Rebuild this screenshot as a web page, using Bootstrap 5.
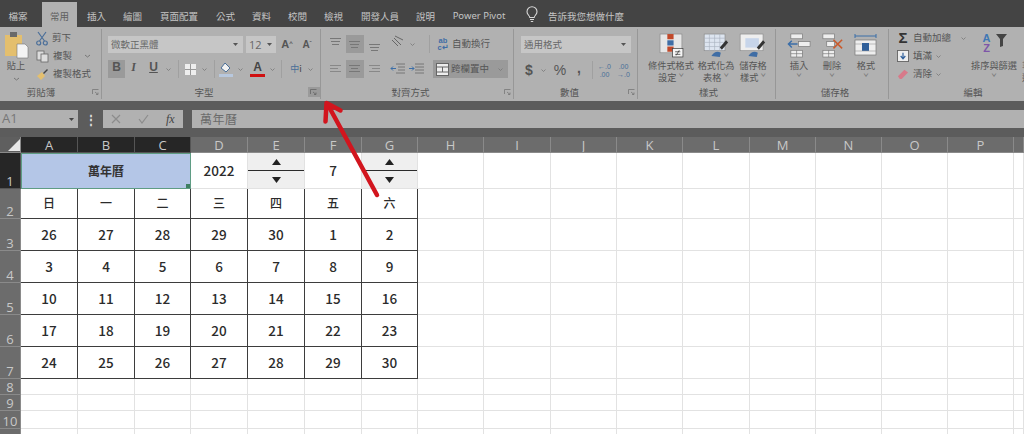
<!DOCTYPE html>
<html lang="zh-Hant">
<head>
  <meta charset="UTF-8">
  <title>萬年曆</title>
  <link href="https://cdn.jsdelivr.net/npm/bootstrap@5.3.0/dist/css/bootstrap.min.css" rel="stylesheet">
  <style>
    html, body { height: 434px; overflow: hidden; }
    body {
      background: #fff;
      font-family: "Noto Sans CJK TC", "Noto Sans", sans-serif;
      font-size: 9.5px;
      line-height: 1.2;
      color: #555;
    }
    /* tab strip */
    .tabstrip { height: 27px; background: #444; color: #c4c4c4; }
    .tab-item { height: 25px; text-align: center; line-height: 28px; flex: none; white-space: nowrap; }
    .tab-item.on { background: #b1b1b1; color: #5f5f5f; }
    /* ribbon */
    .ribbon { height: 74px; background: #b1b1b1; }
    .rgroup { height: 70px; margin-top: 2px; border-right: 1px solid #979797; flex: none; overflow: hidden; }
    .rgroup:last-child { border-right: 0; flex: 1; }
    .rbody { height: 56px; }
    .rlabel { height: 14px; line-height: 14px; text-align: center; white-space: nowrap; }
    .launcher { width: 11px; height: 10px; flex: none; align-self: center; }
    .launcher.hot { background: #9a9a9a; width: 12px; }
    .launcher svg { display: block; margin: 2px; }
    .tool { height: 18px; flex: none; }
    .tool.w17 { width: 17px; }
    .tool.w16 { width: 16px; }
    .tool.hot { background: #9a9a9a; }
    .caret-box { width: 12px; height: 18px; flex: none; display: flex; align-items: center; justify-content: center; }
    .vsep { width: 1px; height: 18px; background: #a0a0a0; flex: none; }
    .dropbox { height: 17px; background: #c6c6c6; padding-left: 3px; color: #666; flex: none; white-space: nowrap; }
    .bigtool { flex: none; text-align: center; line-height: 12px; font-size: 9.2px; white-space: nowrap; }
    .bigicon { height: 25px; width: auto; margin-bottom: 1px; }
    .smalltxt { white-space: nowrap; }
    .wrap-glyph { width: 12px; flex: none; font: 700 7.5px/7px "Liberation Sans", sans-serif; color: #3f6da5; text-align: center; }
    /* formula bar */
    .darkbar { height: 9px; background: #5c5c5c; }
    .fbar { height: 27px; background: #5c5c5c; }
    .fbox { height: 18px; background: #b1b1b1; flex: none; }
    /* sheet */
    table.sheet { border-collapse: separate; border-spacing: 0; table-layout: fixed; width: 1024px; }
    table.sheet td, table.sheet th { padding: 0; border-right: 1px solid #e2e2e2; border-bottom: 1px solid #e2e2e2; text-align: center; vertical-align: middle; overflow: hidden; }
    table.sheet th { background: #6c6c6c; color: #c8c8c8; font-family: "Open Sans", sans-serif; font-weight: 400; font-size: 13px; line-height: 14px; border-color: #8a8a8a; }
    table.sheet th.sel { background: #262626; border-color: #555; }
    table.sheet th.rowh { vertical-align: bottom; }
    table.sheet td { font-size: 13.5px; font-weight: 500; color: #2b2b2b; }
    table.sheet td.cal { border-color: #3d3d3d; }
    table.sheet td.weekday { font-size: 12px; }
    table.sheet td.merged { background: #b4c6e7; border: 1px solid #5f9c84; font-size: 12px; font-weight: 700; color: #333; position: relative; }
    .handle { position: absolute; right: 0; bottom: 0; width: 4px; height: 4px; background: #3f7f63; }
    .spin-up, .spin-down { background: #efefef; height: 17px; display: flex; align-items: center; justify-content: center; }
    .spin-up { border-bottom: 1px solid #2b2b2b; height: 18px; }
    .arrow-over { position: absolute; left: 0; top: 0; pointer-events: none; }
    .sort-letters { width: 10px; font: 700 11px/10px "Liberation Sans", sans-serif; }
  </style>
</head>
<body class="position-relative">

  <!-- tabs -->
  <div class="tabstrip d-flex align-items-end">
    <div class="tab-item" style="width:36px">檔案</div>
    <div class="tab-item on" style="width:35px;margin-left:6px">常用</div>
    <div class="tab-item" style="width:21px;margin-left:9px">插入</div>
    <div class="tab-item" style="width:19px;margin-left:16px">繪圖</div>
    <div class="tab-item" style="width:38px;margin-left:18px">頁面配置</div>
    <div class="tab-item" style="width:19px;margin-left:18px">公式</div>
    <div class="tab-item" style="width:19px;margin-left:17px">資料</div>
    <div class="tab-item" style="width:19px;margin-left:17px">校閱</div>
    <div class="tab-item" style="width:19px;margin-left:17px">檢視</div>
    <div class="tab-item" style="width:38px;margin-left:18px">開發人員</div>
    <div class="tab-item" style="width:19px;margin-left:17px">說明</div>
    <div class="tab-item" style="width:54px;margin-left:17px;font-family:'Noto Sans',sans-serif">Power Pivot</div>
    <svg class="mb-1" style="margin-left:20px" width="12" height="17" viewBox="0 0 12 17" fill="none" stroke="#d8d8d8" stroke-width="1.1"><path d="M3.8 11.5C3.600 9.500 1 8.600 1 5.700a5 5 0 0 1 10 0c0 2.900-2.600 3.800-2.800 5.800zM4 13.500h4M4.800 15.500h2.400"/></svg>
    <div class="tab-item" style="width:78px;margin-left:9px">告訴我您想做什麼</div>
  </div>

  <!-- ribbon -->
  <div class="ribbon d-flex">

    <!-- clipboard -->
    <div class="rgroup" style="width:102px">
      <div class="rbody d-flex">
        <div class="bigtool" style="width:32px;padding-top:3px">
          <svg width="24" height="27" viewBox="0 0 24 27" class="d-block" style="margin-left:5px"><rect x="0" y="3" width="17" height="21" fill="#e4bf6e"/><rect x="5" y="0" width="7" height="5" fill="#6a6a6a"/><path d="M12 12h8l3 3v11H12z" fill="#f4f4f4" stroke="#777" stroke-width=".6"/></svg>
          <div>貼上</div>
          <svg width="7" height="4" viewBox="0 0 7 4"><path d="M1 1l2.500 2L6 1" fill="none" stroke="#777"/></svg>
        </div>
        <div class="smalltxt ms-1">
          <div class="d-flex align-items-center gap-1" style="height:18px">
            <svg width="12" height="15" viewBox="0 0 12 15" fill="none" stroke="#4b6f9a" stroke-width="1.200"><path d="M2 1l6.500 9M10 1L3.500 10"/><circle cx="2.700" cy="12" r="2"/><circle cx="9.300" cy="12" r="2"/></svg>
            <span>剪下</span>
          </div>
          <div class="d-flex align-items-center gap-1" style="height:18px">
            <svg width="13" height="13" viewBox="0 0 13 13" fill="#ddd" stroke="#666" stroke-width=".8"><rect x="1" y="1" width="7" height="9"/><rect x="5" y="4" width="7" height="8"/></svg>
            <span>複製</span>
            <svg class="ms-2" width="7" height="4" viewBox="0 0 7 4"><path d="M1 1l2.500 2L6 1" fill="none" stroke="#777"/></svg>
          </div>
          <div class="d-flex align-items-center gap-1" style="height:18px">
            <svg width="13" height="13" viewBox="0 0 13 13"><path d="M1 8l5-4 3 4-4 4z" fill="#e4bf6e"/><path d="M7 5l4-4 1 1-4 4z" fill="#444"/></svg>
            <span>複製格式</span>
          </div>
        </div>
      </div>
      <div class="d-flex">
        <div class="rlabel flex-grow-1" style="padding-right:8px">剪貼簿</div>
        <div class="launcher"><svg width="7" height="6" viewBox="0 0 7 6" fill="none" stroke="#777" stroke-width=".8"><path d="M.5 5V.5H6.500M3 3l3 2.500M6 3.500v2H4"/></svg></div>
      </div>
    </div>

    <!-- font -->
    <div class="rgroup" style="width:219px;padding-left:6px">
      <div class="rbody">
        <div class="d-flex align-items-center" style="height:24px;padding-top:7px">
          <div class="dropbox d-flex align-items-center justify-content-between" style="width:135px;padding-right:5px"><span>微軟正黑體</span><svg width="5" height="3" viewBox="0 0 5 3"><path d="M0 0h5L2.500 3z" fill="#555"/></svg></div>
          <div class="dropbox d-flex align-items-center justify-content-between" style="width:30px;margin-left:3px;padding-right:4px;font-size:11px;font-family:'Open Sans',sans-serif"><span>12</span><svg width="5" height="3" viewBox="0 0 5 3"><path d="M0 0h5L2.500 3z" fill="#555"/></svg></div>
          <div class="fw-bold text-center" style="width:20px;margin-left:1px;font-size:11px;font-family:'Liberation Sans',sans-serif">A<sup style="font-size:6px">^</sup></div>
          <div class="fw-bold text-center" style="width:20px;font-size:10px;font-family:'Liberation Sans',sans-serif">A<sup style="font-size:6px">ˇ</sup></div>
        </div>
        <div class="d-flex align-items-center" style="margin-top:7px;font-family:'Liberation Sans',sans-serif;font-size:12px;height:18px">
          <div class="tool w17 hot fw-bold text-center">B</div>
          <div class="tool w17 fw-bold fst-italic text-center" style="font-family:'Liberation Serif',serif">I</div>
          <div class="tool w17 fw-bold text-center text-decoration-underline" style="margin-left:3px">U</div>
          <div class="caret-box"><svg width="5" height="3" viewBox="0 0 5 3"><path d="M.5.500l2 2 2-2" fill="none" stroke="#777" stroke-width=".8"/></svg></div>
          <div class="vsep" style="margin:0 3px 0 4px"></div>
          <div class="tool w16 d-flex align-items-center justify-content-center"><svg width="11" height="11" viewBox="0 0 11 11"><rect width="11" height="11" fill="#eee"/><path d="M5.500 0v11M0 5.500h11" stroke="#999"/></svg></div>
          <div class="caret-box"><svg width="5" height="3" viewBox="0 0 5 3"><path d="M.5.500l2 2 2-2" fill="none" stroke="#777" stroke-width=".8"/></svg></div>
          <div class="vsep" style="margin:0 3px 0 4px"></div>
          <div class="tool w16 d-flex align-items-center justify-content-center"><svg width="14" height="15" viewBox="0 0 14 15"><path d="M6 1l5 5-4 4-5-4z" fill="#f1f1f1" stroke="#4a6f98"/><rect y="12" width="14" height="3" fill="#b8c8de"/></svg></div>
          <div class="caret-box"><svg width="5" height="3" viewBox="0 0 5 3"><path d="M.5.500l2 2 2-2" fill="none" stroke="#777" stroke-width=".8"/></svg></div>
          <div class="tool w17 text-center fw-bold" style="margin-left:3px;color:#444;line-height:15px">A<div style="height:3px;background:#d01010;margin:-1px 1px 0"></div></div>
          <div class="caret-box"><svg width="5" height="3" viewBox="0 0 5 3"><path d="M.5.500l2 2 2-2" fill="none" stroke="#777" stroke-width=".8"/></svg></div>
          <div class="vsep" style="margin:0 6px 0 3px"></div>
          <div class="tool w16 text-center" style="font-family:'Noto Sans CJK TC',sans-serif;font-size:9px;color:#4a6f98;line-height:18px;white-space:nowrap">中<span style="color:#444">i</span></div>
          <div class="caret-box"><svg width="5" height="3" viewBox="0 0 5 3"><path d="M.5.500l2 2 2-2" fill="none" stroke="#777" stroke-width=".8"/></svg></div>
        </div>
      </div>
      <div class="d-flex">
        <div class="rlabel flex-grow-1" style="padding-right:8px">字型</div>
        <div class="launcher hot"><svg width="7" height="6" viewBox="0 0 7 6" fill="none" stroke="#666" stroke-width=".8"><path d="M.5 5V.5H6.500M3 3l3 2.500M6 3.500v2H4"/></svg></div>
      </div>
    </div>

    <!-- alignment -->
    <div class="rgroup" style="width:193px;padding-left:6px">
      <div class="rbody" style="padding-top:6px">
        <div class="d-flex align-items-center" style="height:18px">
          <div class="tool w17"><svg width="17" height="18" viewBox="0 0 17 18" stroke="#777"><path d="M3 3.500h11M4 6.500h9M5 9.500h7" fill="none"/></svg></div>
          <div class="tool hot" style="width:18px;margin-left:2px"><svg width="17" height="18" viewBox="0 0 17 18" stroke="#777"><path d="M3 6.500h11M4 9.500h9M5 12.500h7" fill="none"/></svg></div>
          <div class="tool w17" style="margin-left:2px"><svg width="17" height="18" viewBox="0 0 17 18" stroke="#777"><path d="M3 9.500h11M4 12.500h9M5 15.500h7" fill="none"/></svg></div>
          <div class="tool w16" style="margin-left:7px"><svg width="16" height="16" viewBox="0 0 16 16" fill="none" stroke="#666"><path d="M2 5l6 6M4 3l7 7M5 1l8 4"/></svg></div>
          <div class="caret-box"><svg width="5" height="3" viewBox="0 0 5 3"><path d="M.5.500l2 2 2-2" fill="none" stroke="#777" stroke-width=".8"/></svg></div>
          <div class="vsep" style="margin:0 7px 0 11px"></div>
          <div class="wrap-glyph">ab<br>c↵</div>
          <span class="smalltxt" style="margin-left:3px">自動換行</span>
        </div>
        <div class="d-flex align-items-center" style="margin-top:7px;height:18px">
          <div class="tool w17"><svg width="17" height="18" viewBox="0 0 17 18" stroke="#888"><path d="M3 5.500h11M3 8.500h8M3 11.500h11" fill="none"/></svg></div>
          <div class="tool hot" style="width:18px;margin-left:2px"><svg width="17" height="18" viewBox="0 0 17 18" stroke="#777"><path d="M3 5.500h11M5 8.500h7M3 11.500h11" fill="none"/></svg></div>
          <div class="tool w17" style="margin-left:2px"><svg width="17" height="18" viewBox="0 0 17 18" stroke="#888"><path d="M3 5.500h11M6 8.500h8M3 11.500h11" fill="none"/></svg></div>
          <div class="tool w16" style="margin-left:7px"><svg width="16" height="18" viewBox="0 0 16 18" fill="none"><path d="M6 4h9M8 7h7M8 10h7M6 13h9" stroke="#777"/><path d="M1 8.500h5M3 6.500l-2 2 2 2" stroke="#3b6ea8"/></svg></div>
          <div class="tool w16" style="margin-left:2px"><svg width="16" height="18" viewBox="0 0 16 18" fill="none"><path d="M7 4h9M7 7h9M7 10h9M7 13h9" stroke="#777"/><path d="M1 8.500h5M4 6.500l2 2-2 2" stroke="#3b6ea8"/></svg></div>
          <div class="tool hot d-flex align-items-center" style="width:75px;margin-left:9px">
            <svg style="margin-left:3px" width="13" height="13" viewBox="0 0 13 13" fill="#eee" stroke="#666"><rect x=".5" y=".5" width="12" height="12"/><path d="M.5 4h12M.5 9h12M6.500 4v5" fill="none"/></svg>
            <span class="smalltxt" style="margin-left:2px">跨欄置中</span>
            <svg style="margin-left:9px" width="5" height="3" viewBox="0 0 5 3"><path d="M.5.500l2 2 2-2" fill="none" stroke="#777" stroke-width=".8"/></svg>
          </div>
        </div>
      </div>
      <div class="d-flex">
        <div class="rlabel flex-grow-1" style="padding-right:8px">對齊方式</div>
        <div class="launcher"><svg width="7" height="6" viewBox="0 0 7 6" fill="none" stroke="#777" stroke-width=".8"><path d="M.5 5V.5H6.500M3 3l3 2.500M6 3.500v2H4"/></svg></div>
      </div>
    </div>

    <!-- number -->
    <div class="rgroup" style="width:124px;padding-left:7px">
      <div class="rbody" style="padding-top:7px">
        <div class="dropbox d-flex align-items-center justify-content-between" style="width:110px;padding-right:5px"><span>通用格式</span><svg width="5" height="3" viewBox="0 0 5 3"><path d="M0 0h5L2.500 3z" fill="#555"/></svg></div>
        <div class="d-flex align-items-center" style="margin-top:8px;height:18px;font-family:'Liberation Sans',sans-serif">
          <div class="tool w16 text-center fw-bold" style="font-size:14px;line-height:18px">$</div>
          <div class="caret-box"><svg width="5" height="3" viewBox="0 0 5 3"><path d="M.5.500l2 2 2-2" fill="none" stroke="#777" stroke-width=".8"/></svg></div>
          <div class="tool w16 text-center" style="font-size:14px;line-height:18px;margin-left:3px">%</div>
          <div class="tool w16 text-center fw-bold" style="font-size:14px;line-height:14px;margin-left:3px">,</div>
          <div class="vsep" style="margin:0 3px 0 5px"></div>
          <div class="tool w17 text-center" style="font-size:7px;line-height:8px;padding-top:2px;color:#4a6f98;white-space:nowrap">←.0<br>.00</div>
          <div class="tool w17 text-center" style="font-size:7px;line-height:8px;padding-top:2px;margin-left:2px;color:#4a6f98;white-space:nowrap">.00<br>→.0</div>
        </div>
      </div>
      <div class="d-flex">
        <div class="rlabel flex-grow-1" style="padding-right:8px">數值</div>
        <div class="launcher"><svg width="7" height="6" viewBox="0 0 7 6" fill="none" stroke="#777" stroke-width=".8"><path d="M.5 5V.5H6.500M3 3l3 2.500M6 3.500v2H4"/></svg></div>
      </div>
    </div>

    <!-- styles -->
    <div class="rgroup" style="width:138px;padding-left:9px">
      <div class="rbody d-flex" style="padding-top:4px">
        <div class="bigtool" style="width:48px">
          <svg class="bigicon d-block mx-auto" viewBox="0 0 24 24"><rect x="1" y="1" width="21" height="18" fill="#e6e6e6" stroke="#888" stroke-width=".6"/><rect x="8" y="1" width="6" height="5" fill="#c1492a"/><rect x="8" y="7" width="6" height="5" fill="#3f6da5"/><rect x="8" y="13" width="6" height="5" fill="#c1492a"/><rect x="13" y="15" width="10" height="8" fill="#f4f4f4" stroke="#444" stroke-width=".7"/><path d="M15.500 18h5M15.500 20.500h5M19.500 16.500l-3 5" stroke="#333" stroke-width=".7"/></svg>
          條件式格式<br>設定 <span style="color:#777">ˇ</span>
        </div>
        <div class="bigtool" style="width:38px;margin-left:2px">
          <svg class="bigicon d-block mx-auto" viewBox="0 0 30 24"><rect x="4" y="1" width="20" height="16" fill="#dde5f0" stroke="#888" stroke-width=".6"/><path d="M4 5h20M4 9h20M4 13h20M9 1v16M14 1v16M19 1v16" stroke="#a9b2bf" stroke-width=".6"/><path d="M19 14l6-7 2 2-6 7z" fill="#333"/><path d="M11 22q4-6 9-3l-1 4z" fill="#3f6da5"/></svg>
          格式化為<br>表格 <span style="color:#777">ˇ</span>
        </div>
        <div class="bigtool" style="width:38px;margin-left:-1px">
          <svg class="bigicon d-block mx-auto" viewBox="0 0 30 24"><rect x="3" y="1" width="22" height="16" fill="#eee" stroke="#888" stroke-width=".6"/><rect x="8" y="5" width="13" height="9" fill="#c7d5ea"/><path d="M19 14l6-7 2 2-6 7z" fill="#333"/><path d="M11 22q4-6 9-3l-1 4z" fill="#3f6da5"/></svg>
          儲存格<br>樣式 <span style="color:#777">ˇ</span>
        </div>
      </div>
      <div class="rlabel" style="padding-right:5px">樣式</div>
    </div>

    <!-- cells -->
    <div class="rgroup" style="width:113px;padding-left:6px">
      <div class="rbody d-flex" style="padding-top:4px">
        <div class="bigtool" style="width:34px">
          <svg class="bigicon d-block mx-auto" viewBox="0 0 26 26" fill="#eee" stroke="#777" stroke-width=".7"><rect x="4" y="1" width="12" height="5"/><rect x="4" y="18" width="12" height="7"/><path d="M4 21.500h12M10 18v7" fill="none"/><rect x="12" y="9" width="12" height="5"/><path d="M1 11.500h10M5 8l-3.500 3.500L5 15" fill="none" stroke="#3b6ea8" stroke-width="1.500"/></svg>
          插入<br><span style="color:#777">ˇ</span>
        </div>
        <div class="bigtool" style="width:34px;margin-left:-1px">
          <svg class="bigicon d-block mx-auto" viewBox="0 0 26 26" fill="#eee" stroke="#777" stroke-width=".7"><rect x="3" y="1" width="12" height="5"/><rect x="3" y="18" width="12" height="7"/><path d="M3 21.500h12M9 18v7" fill="none"/><rect x="7" y="9" width="8" height="5"/><path d="M14 7l9 9M23 7l-9 9" fill="none" stroke="#c95a2c" stroke-width="1.600"/></svg>
          刪除<br><span style="color:#777">ˇ</span>
        </div>
        <div class="bigtool" style="width:34px">
          <svg class="bigicon d-block mx-auto" viewBox="0 0 24 25"><path d="M1 3h21M1 1v4M22 1v4" stroke="#3b6ea8" fill="none"/><rect x="1" y="7" width="21" height="15" fill="#eee" stroke="#777" stroke-width=".7"/><rect x="8" y="10" width="7" height="8" fill="#2f5f9a"/><path d="M1 11h7M15 11h7M1 18h21" stroke="#999" stroke-width=".6"/></svg>
          格式<br><span style="color:#777">ˇ</span>
        </div>
      </div>
      <div class="rlabel">儲存格</div>
    </div>

    <!-- editing -->
    <div class="rgroup" style="padding-left:7px">
      <div class="rbody d-flex">
        <div class="smalltxt flex-shrink-0" style="width:73px">
          <div class="d-flex align-items-center" style="height:18px">
            <span class="text-center fw-bold" style="width:14px;font-size:15px;color:#333;font-family:'Liberation Sans',sans-serif">Σ</span>
            <span style="margin-left:3px">自動加總</span>
            <svg style="margin-left:10px" width="5" height="3" viewBox="0 0 5 3"><path d="M.5.500l2 2 2-2" fill="none" stroke="#777" stroke-width=".8"/></svg>
          </div>
          <div class="d-flex align-items-center" style="height:18px">
            <svg style="margin-left:1px" width="12" height="12" viewBox="0 0 13 13"><rect x=".5" y=".5" width="12" height="12" fill="#eee" stroke="#666"/><path d="M6.500 3v6M4 6.500l2.500 3 2.500-3" fill="none" stroke="#2f5f9a" stroke-width="1.300"/></svg>
            <span style="margin-left:4px">填滿</span>
            <svg class="ms-1" width="5" height="3" viewBox="0 0 5 3"><path d="M.5.500l2 2 2-2" fill="none" stroke="#777" stroke-width=".8"/></svg>
          </div>
          <div class="d-flex align-items-center" style="height:18px">
            <svg style="margin-left:1px" width="12" height="12" viewBox="0 0 13 13"><path d="M1 9l7-7 4 3-7 7H3z" fill="#d77a8a"/></svg>
            <span style="margin-left:4px">清除</span>
            <svg class="ms-1" width="5" height="3" viewBox="0 0 5 3"><path d="M.5.500l2 2 2-2" fill="none" stroke="#777" stroke-width=".8"/></svg>
          </div>
        </div>
        <div class="bigtool" style="width:50px;padding-top:4px">
          <div class="d-flex justify-content-center" style="height:25px;margin-bottom:1px">
            <div class="sort-letters"><div style="color:#3f77b5">A</div><div style="color:#7d55a8">Z</div></div>
            <svg class="ms-1" width="11" height="14" viewBox="0 0 11 14"><path d="M0 1h11L7 6v7l-3 1V6z" fill="#444"/></svg>
          </div>
          排序與篩選<br><span style="color:#777">ˇ</span>
        </div>
        <div class="bigtool" style="margin-left:3px;padding-top:30px">尋<br>選</div>
      </div>
      <div class="rlabel" style="padding-left:26px;width:128px">編輯</div>
    </div>
  </div>

  <div class="darkbar"></div>

  <!-- formula bar -->
  <div class="fbar d-flex">
    <div class="fbox d-flex align-items-center justify-content-between" style="width:78px;padding:0 4px 0 2px;font-family:'Open Sans',sans-serif;font-size:13px;color:#777"><span>A1</span><svg width="5" height="3" viewBox="0 0 5 3"><path d="M0 0h5L2.500 3z" fill="#444"/></svg></div>
    <div class="text-center" style="width:25px;height:18px;color:#ddd;font-weight:700;font-size:12px;line-height:18px">⋮</div>
    <div class="fbox d-flex align-items-center justify-content-around" style="width:80px">
      <svg width="10" height="10" viewBox="0 0 10 10" stroke="#8c8c8c" stroke-width="1.200"><path d="M1 1l8 8M9 1L1 9"/></svg>
      <svg width="11" height="10" viewBox="0 0 11 10" fill="none" stroke="#8c8c8c" stroke-width="1.200"><path d="M1 5l3 4 6-8"/></svg>
      <span style="font-family:'Liberation Serif',serif;font-style:italic;font-size:12px;color:#444">fx</span>
    </div>
    <div class="fbox flex-grow-1 px-2" style="margin-left:9px;font-size:12px;line-height:18px;color:#6b6b6b;letter-spacing:.5px">萬年曆</div>
  </div>

  <table class="sheet" id="sheet"></table>

  <!-- red annotation arrow -->
  <svg class="arrow-over" width="1024" height="434" viewBox="0 0 1024 434" fill="none" stroke="#d2151e" stroke-width="4.500" stroke-linecap="round" stroke-linejoin="round">
    <path d="M377 195L328 105"/>
    <path d="M325.500 121.500L326.500 103L340.500 110.500"/>
  </svg>

  <script src="https://cdn.jsdelivr.net/npm/bootstrap@5.3.0/dist/js/bootstrap.bundle.min.js"></script>
  <script>
    // Column widths and row heights of the sheet
    const colWidths = [21, 57, 57, 56, 57, 57, 57, 56, 66, 67, 66, 66, 67, 66, 66, 66, 66, 10];
    const colNames = ['', 'A', 'B', 'C', 'D', 'E', 'F', 'G', 'H', 'I', 'J', 'K', 'L', 'M', 'N', 'O', 'P', ''];
    const rowHeights = [35, 30, 32, 32, 32, 32, 32, 16, 16, 18, 18];
    const calendar = [
      ['日', '一', '二', '三', '四', '五', '六'],
      [26, 27, 28, 29, 30, 1, 2],
      [3, 4, 5, 6, 7, 8, 9],
      [10, 11, 12, 13, 14, 15, 16],
      [17, 18, 19, 20, 21, 22, 23],
      [24, 25, 26, 27, 28, 29, 30]
    ];
    const spinner = `<div class="spin-up"><svg width="9" height="6" viewBox="0 0 9 6"><path d="M4.500 0L9 6H0z" fill="#222"/></svg></div>
      <div class="spin-down"><svg width="9" height="6" viewBox="0 0 9 6"><path d="M0 0h9L4.500 6z" fill="#222"/></svg></div>`;

    let html = '<colgroup>' + colWidths.map(w => `<col style="width:${w}px">`).join('') + '</colgroup>';

    // Header row
    html += '<tr style="height:16px">';
    colNames.forEach((name, i) => {
      if (i === 0) {
        html += '<th style="background:#5f5f5f"><svg class="d-block ms-auto" width="13" height="13" viewBox="0 0 13 13"><path d="M13 1v12H1z" fill="#e8e8e8"/></svg></th>';
      } else {
        html += `<th class="${i <= 3 ? 'sel' : ''}">${name}</th>`;
      }
    });
    html += '</tr>';

    // Body rows
    rowHeights.forEach((h, r) => {
      html += `<tr style="height:${h}px"><th class="rowh ${r === 0 ? 'sel' : ''}">${r + 1}</th>`;
      if (r === 0) {
        html += '<td colspan="3" class="merged">萬年曆<div class="handle"></div></td>';
        html += `<td>2022</td><td>${spinner}</td><td>7</td><td>${spinner}</td>`;
      } else if (r <= 6) {
        calendar[r - 1].forEach(v => { html += `<td class="cal ${r === 1 ? 'weekday' : ''}">${v}</td>`; });
      } else {
        html += '<td></td>'.repeat(7);
      }
      html += '<td></td>'.repeat(colNames.length - 8);
      html += '</tr>';
    });
    document.getElementById('sheet').innerHTML = html;
  </script>
</body>
</html>
